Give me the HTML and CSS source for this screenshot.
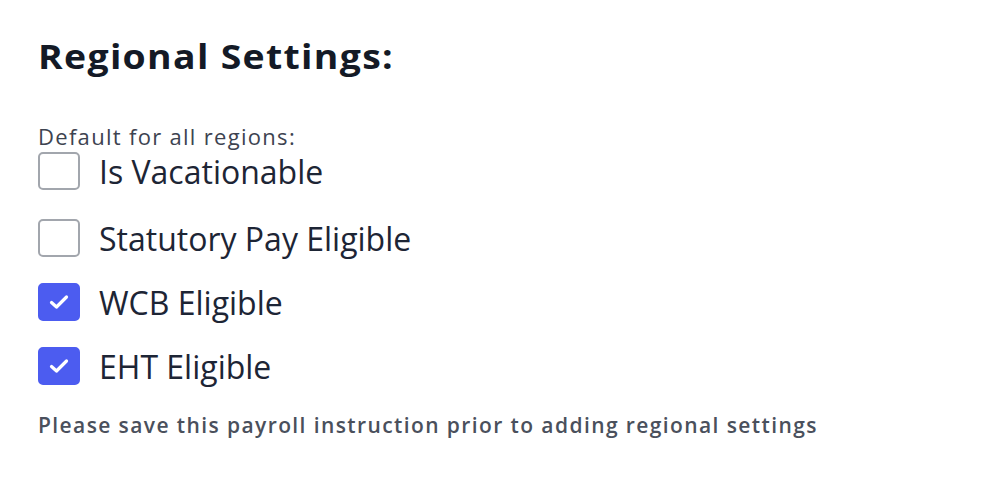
FILE: index.html
```html
<!DOCTYPE html>
<html lang="en">
<head>
  <meta charset="UTF-8">
  <title>Regional Settings</title>
  <link rel="stylesheet" href="styles.css">
</head>
<body>
  <div class="settings">
    <h2 class="settings-title">Regional Settings:</h2>
    <div class="settings-sub">Default for all regions:</div>
    <ul class="check-list">
      <li class="check-row">
        <span class="box"></span>
        <span class="check-label">Is Vacationable</span>
      </li>
      <li class="check-row">
        <span class="box"></span>
        <span class="check-label">Statutory Pay Eligible</span>
      </li>
      <li class="check-row">
        <span class="box checked">
          <svg viewBox="0 0 22 22" width="22" height="22"><path d="M3.5 11.5L8.5 16 18.5 6" fill="none" stroke="#fff" stroke-width="3.2" stroke-linecap="round" stroke-linejoin="round"/></svg>
        </span>
        <span class="check-label">WCB Eligible</span>
      </li>
      <li class="check-row">
        <span class="box checked">
          <svg viewBox="0 0 22 22" width="22" height="22"><path d="M3.5 11.5L8.5 16 18.5 6" fill="none" stroke="#fff" stroke-width="3.2" stroke-linecap="round" stroke-linejoin="round"/></svg>
        </span>
        <span class="check-label">EHT Eligible</span>
      </li>
    </ul>
    <p class="settings-note">Please save this payroll instruction prior to adding regional settings</p>
  </div>
</body>
</html>
```

FILE: styles.css
```css
html, body {
  margin: 0;
  padding: 0;
  background: #fff;
  font-family: "Open Sans", "Noto Sans", sans-serif;
}
.settings {
  padding: 30px 38px;
}
.settings-title {
  width: fit-content;
  margin: 0 0 41px;
  font-size: 34px;
  font-weight: 700;
  letter-spacing: 1.2px;
  line-height: 52px;
  color: #141a26;
  transform: scaleX(1.1);
  transform-origin: left center;
}
.settings-sub {
  font-size: 22px;
  letter-spacing: 1.3px;
  line-height: 26px;
  color: #3d4350;
}
.check-list {
  list-style: none;
  margin: 0;
  padding: 0;
}
.check-row {
  display: flex;
  align-items: center;
  gap: 19px;
  height: 64px;
}
.check-row:first-child {
  height: 44px;
  margin-bottom: 13px;
}
.box {
  width: 38px;
  height: 34px;
  border: 2px solid #a2a6ad;
  border-radius: 5px;
  display: flex;
  align-items: center;
  justify-content: center;
  flex-shrink: 0;
}
.box.checked {
  background: #4c5cf0;
  border-color: #4c5cf0;
}
.check-label {
  font-size: 32px;
  color: #1d2535;
}
.settings-note {
  margin: 13px 0 0;
  font-size: 21px;
  font-weight: 600;
  letter-spacing: 1.4px;
  color: #4a505c;
}
```
